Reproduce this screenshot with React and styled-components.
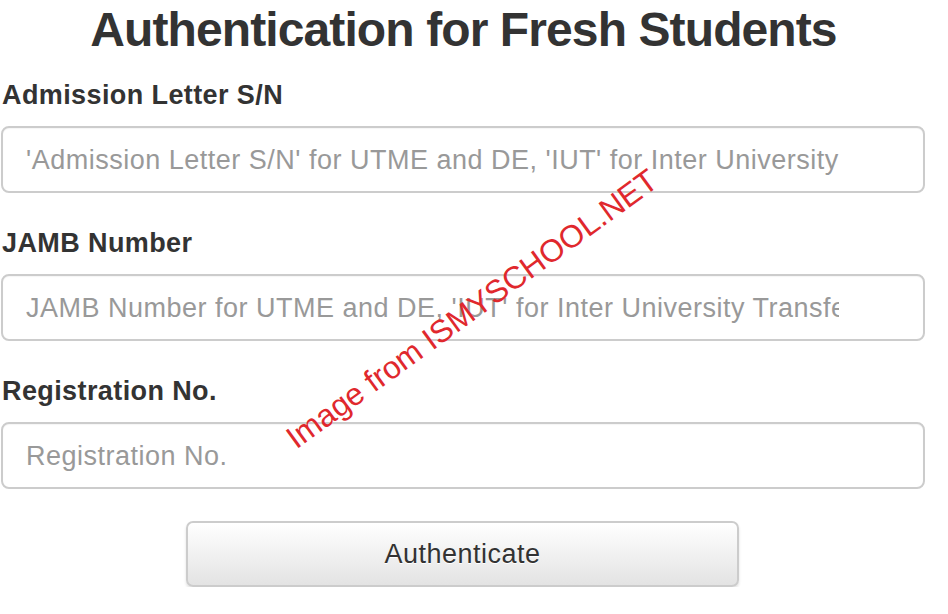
import React from "react";
import styled, { createGlobalStyle } from "styled-components";

const Global = createGlobalStyle`
  html, body { margin: 0; padding: 0; background: #fff; }
  body { font-family: "Liberation Sans", Arial, Helvetica, sans-serif; color: #333; }
  * { box-sizing: border-box; }
`;

const Page = styled.div`
  position: relative;
  width: 926px;
  padding-left: 1px;
`;

const Title = styled.h1`
  margin: 4px 0 0;
  font-size: 48px;
  line-height: 1.1;
  font-weight: 700;
  letter-spacing: -0.9px;
  text-align: center;
  color: #333;
`;

const Form = styled.form`
  display: flex;
  flex-direction: column;
  margin-top: 20px;
`;

const Group = styled.div`
  display: flex;
  flex-direction: column;
  margin-bottom: 32px;
`;

const Label = styled.label`
  display: block;
  font-size: 27px;
  line-height: 37px;
  font-weight: 700;
  letter-spacing: 0.4px;
  color: #333;
  margin: 0 0 12px 1px;
`;

const Input = styled.input`
  width: 924px;
  height: 67px;
  padding: 3px 84px 0 23px;
  font-family: "Liberation Sans", Arial, sans-serif;
  font-size: 27px;
  letter-spacing: 0.5px;
  color: #555;
  border: 2px solid #ccc;
  border-radius: 8px;
  background: #fff;
  box-shadow: inset 0 1px 1px rgba(0, 0, 0, 0.04);
  outline: none;
  &::placeholder { color: #999; }
`;

const ButtonRow = styled.div`
  display: flex;
  justify-content: center;
  width: 926px;
`;

const Button = styled.button`
  width: 553px;
  height: 66px;
  margin-left: -3px;
  padding-top: 2px;
  font-family: "Liberation Sans", Arial, sans-serif;
  font-size: 27px;
  letter-spacing: 0.5px;
  color: #333;
  background: linear-gradient(to bottom, #ffffff 0%, #e3e3e3 100%);
  border: 2px solid #ccc;
  border-radius: 7px;
  box-shadow: 0 2px 3px rgba(0, 0, 0, 0.12);
  text-shadow: 0 1px 0 #fff;
  cursor: pointer;
`;

const Watermark = styled.div`
  position: absolute;
  left: 472px;
  top: 305px;
  transform: translate(-50%, -50%) rotate(-36deg);
  white-space: nowrap;
  font-family: "Liberation Sans", Arial, sans-serif;
  font-size: 31.5px;
  color: #e0282d;
  pointer-events: none;
`;

const fields = [
  { id: "sn", label: "Admission Letter S/N", ph: "'Admission Letter S/N' for UTME and DE, 'IUT' for Inter University Transfer" },
  { id: "jamb", label: "JAMB Number", ph: "JAMB Number for UTME and DE, 'IUT' for Inter University Transfer" },
  { id: "reg", label: "Registration No.", ph: "Registration No." },
];

export default function App() {
  return (
    <Page>
      <Global />
      <Title>Authentication for Fresh Students</Title>
      <Form onSubmit={(e) => e.preventDefault()}>
        {fields.map((f) => (
          <Group key={f.id}>
            <Label htmlFor={f.id}>{f.label}</Label>
            <Input id={f.id} placeholder={f.ph} />
          </Group>
        ))}
        <ButtonRow>
          <Button type="submit">Authenticate</Button>
        </ButtonRow>
      </Form>
      <Watermark>Image from ISMYSCHOOL.NET</Watermark>
    </Page>
  );
}
